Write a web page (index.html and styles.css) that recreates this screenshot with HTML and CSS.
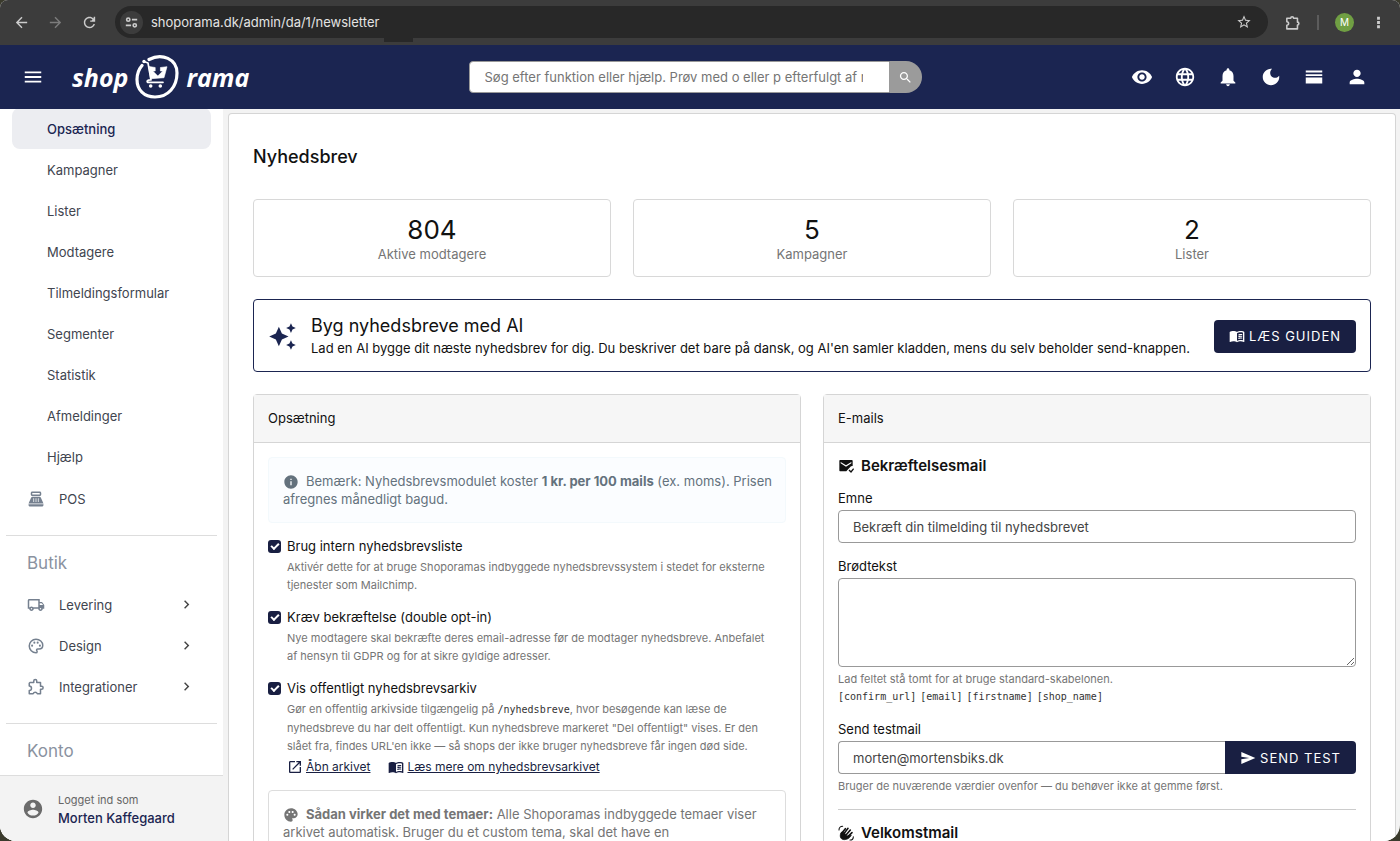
FILE: index.html
```html
<!DOCTYPE html>
<html lang="da">
<head>
  <meta charset="UTF-8">
  <meta name="viewport" content="width=device-width, initial-scale=1">
  <title>Nyhedsbrev</title>
  <link rel="stylesheet" href="styles.css">
</head>
<body>
  <!-- icons used more than once -->
  <svg class="sprite" aria-hidden="true">
    <symbol id="i-book" viewBox="0 0 24 24"><path d="M21 5c-1.11-.35-2.33-.5-3.5-.5-1.95 0-4.05.4-5.5 1.5-1.45-1.1-3.55-1.5-5.5-1.5S2.45 4.9 1 6v14.65c0 .25.25.5.5.5.1 0 .15-.05.25-.05C3.1 20.45 5.05 20 6.5 20c1.95 0 4.05.4 5.5 1.5 1.35-.85 3.8-1.5 5.5-1.5 1.65 0 3.35.3 4.75 1.05.1.05.15.05.25.05.25 0 .5-.25.5-.5V6c-.6-.45-1.25-.75-2-1zm0 13.5c-1.1-.35-2.3-.5-3.5-.5-1.7 0-4.15.65-5.5 1.5V8c1.35-.85 3.8-1.5 5.5-1.5 1.2 0 2.4.15 3.5.5v11.5zM14 9.6c2-.8 4-.9 5.800-.5v1.500c-1.900-.400-3.900-.300-5.800.6zM14 12.300c2-.8 4-.9 5.800-.5v1.500c-1.900-.400-3.900-.300-5.800.6zM14 15c2-.8 4-.9 5.800-.5V16c-1.900-.400-3.900-.300-5.800.6z"/></symbol>
    <symbol id="i-chevron" viewBox="0 0 24 24"><path d="M10 6L8.59 7.41 13.17 12l-4.58 4.59L10 18l6-6z"/></symbol>
  </svg>

  <div class="window">
    <div class="browser">
      <button class="nav-btn" aria-label="Tilbage"><svg viewBox="0 0 24 24"><path d="M20 11H7.83l5.59-5.59L12 4l-8 8 8 8 1.41-1.41L7.83 13H20v-2z"/></svg></button>
      <button class="nav-btn off" aria-label="Frem"><svg viewBox="0 0 24 24"><path d="M4 13h12.170l-5.590 5.590L12 20l8-8-8-8-1.410 1.410L16.170 11H4z"/></svg></button>
      <button class="nav-btn" aria-label="Genindlæs"><svg viewBox="0 0 24 24"><path d="M17.65 6.35C16.2 4.9 14.21 4 12 4c-4.42 0-7.99 3.58-7.99 8s3.57 8 7.99 8c3.73 0 6.84-2.55 7.73-6h-2.08c-.82 2.33-3.04 4-5.65 4-3.31 0-6-2.69-6-6s2.69-6 6-6c1.66 0 3.14.69 4.22 1.78L15 9h-2v2h7V4h-2z"/></svg></button>
      <div class="address">
        <button class="site-info" aria-label="Websiteoplysninger"><svg viewBox="0 0 16 16" fill="none" stroke="currentColor" stroke-width="2"><circle cx="4" cy="4.500" r="2"/><path d="M8.500 4.500H15M1 11.500h6.500"/><circle cx="12" cy="11.500" r="2"/></svg></button>
        <input type="text" value="shoporama.dk/admin/da/1/newsletter" aria-label="Adresse">
        <button class="star" aria-label="Bogmærke"><svg viewBox="0 0 24 24"><path d="M22 9.24l-7.19-.62L12 2 9.19 8.63 2 9.24l5.46 4.73L5.82 21 12 17.27 18.18 21l-1.63-7.03L22 9.24zM12 15.4l-3.76 2.27 1-4.28-3.32-2.88 4.38-.38L12 6.1l1.71 4.04 4.38.38-3.32 2.88 1 4.28L12 15.4z"/></svg></button>
      </div>
      <div class="browser-tools">
        <button aria-label="Udvidelser"><svg viewBox="0 0 24 24" fill="none" stroke="currentColor" stroke-width="2.200" stroke-linejoin="round"><path d="M4 6h5.500a2 2 0 0 1 4 0H19v5.500a2 2 0 0 1 0 4V21H4v-5a2.500 2.500 0 0 0 0-5z"/></svg></button>
        <span class="sep"></span>
        <button class="avatar" aria-label="Profil">M</button>
        <button aria-label="Menu"><svg viewBox="0 0 24 24"><path d="M10 4h4v4h-4zM10 10h4v4h-4zM10 16h4v4h-4z"/></svg></button>
      </div>
    </div>

    <header class="topbar">
      <div class="brand">
        <button aria-label="Menu"><svg viewBox="0 0 24 24"><path d="M3 18h18v-2H3v2zm0-5h18v-2H3v2zm0-7v2h18V6H3z"/></svg></button>
        <a href="#" class="logo">
          <span>shop</span>
          <svg viewBox="0 0 44 46" fill="none" stroke="currentColor" stroke-linecap="round" stroke-linejoin="round">
            <path d="M14 5.500C27-1.500 42 5 42 19 42 33 33 43 20 43 9 43 2 36 2 25.500 2 20 4 15 7 11.500" stroke-width="3.200"/>
            <path d="M9 7.500l4 1.500 3 17c-2.800-.4-4.600 1-3.500 2.300H28" stroke-width="1.700"/>
            <circle cx="9" cy="7.500" r="1.700" fill="currentColor" stroke="none"/>
            <path d="M14 12.500l6.200 1v3.500h-2.400l5 5 5-5h-2.400v-3.500l6.600-.8-3 11-13 1z" fill="currentColor" stroke-width=".6"/>
            <circle cx="15.700" cy="32" r="1.800" fill="currentColor" stroke="none"/>
            <circle cx="25.300" cy="32" r="1.800" fill="currentColor" stroke="none"/>
          </svg>
          <span>rama</span>
        </a>
      </div>
      <form class="search">
        <input type="text" placeholder="Søg efter funktion eller hjælp. Prøv med o eller p efterfulgt af mellemrum" aria-label="Søg">
        <button type="button" aria-label="Søg"><svg viewBox="0 0 24 24"><path d="M15.5 14h-.79l-.28-.27C15.41 12.59 16 11.11 16 9.5 16 5.91 13.09 3 9.5 3S3 5.91 3 9.5 5.91 16 9.5 16c1.61 0 3.09-.59 4.23-1.57l.27.28v.79l5 4.99L20.49 19l-4.99-5zm-6 0C7.01 14 5 11.99 5 9.5S7.01 5 9.5 5 14 7.01 14 9.5 11.99 14 9.5 14z"/></svg></button>
      </form>
      <div class="actions">
        <button aria-label="Se shop"><svg viewBox="0 0 24 24"><path d="M12 4.5C7 4.5 2.73 7.61 1 12c1.73 4.39 6 7.5 11 7.5s9.27-3.11 11-7.5c-1.73-4.39-6-7.5-11-7.5zM12 17c-2.76 0-5-2.24-5-5s2.24-5 5-5 5 2.24 5 5-2.24 5-5 5zm0-8c-1.66 0-3 1.34-3 3s1.34 3 3 3 3-1.34 3-3-1.34-3-3-3z"/></svg></button>
        <button aria-label="Sprog"><svg viewBox="0 0 24 24"><path d="M11.99 2C6.47 2 2 6.48 2 12s4.47 10 9.99 10C17.52 22 22 17.52 22 12S17.52 2 11.99 2zm6.93 6h-2.95c-.32-1.25-.78-2.45-1.38-3.56 1.84.63 3.37 1.91 4.33 3.56zM12 4.04c.83 1.2 1.48 2.53 1.91 3.96h-3.82c.43-1.43 1.08-2.76 1.91-3.96zM4.26 14C4.1 13.36 4 12.69 4 12s.1-1.36.26-2h3.38c-.08.66-.14 1.32-.14 2s.06 1.34.14 2H4.26zm.82 2h2.95c.32 1.25.78 2.45 1.38 3.56-1.84-.63-3.37-1.9-4.33-3.56zm2.95-8H5.08c.96-1.66 2.49-2.93 4.33-3.56C8.81 5.55 8.35 6.75 8.03 8zM12 19.96c-.83-1.2-1.48-2.53-1.91-3.96h3.82c-.43 1.43-1.08 2.76-1.91 3.96zM14.34 14H9.66c-.09-.66-.16-1.32-.16-2s.07-1.35.16-2h4.68c.09.65.16 1.32.16 2s-.07 1.34-.16 2zm.25 5.56c.6-1.11 1.06-2.31 1.38-3.56h2.95c-.96 1.65-2.49 2.93-4.33 3.56zM16.36 14c.08-.66.14-1.32.14-2s-.06-1.34-.14-2h3.38c.16.64.26 1.31.26 2s-.1 1.36-.26 2h-3.38z"/></svg></button>
        <button aria-label="Notifikationer"><svg viewBox="0 0 24 24"><path d="M12 22c1.1 0 2-.9 2-2h-4c0 1.1.89 2 2 2zm6-6v-5c0-3.07-1.64-5.64-4.5-6.32V4c0-.83-.67-1.5-1.5-1.5s-1.5.67-1.5 1.5v.68C7.63 5.36 6 7.92 6 11v5l-2 2v1h16v-1l-2-2z"/></svg></button>
        <button aria-label="Mørkt tema"><svg viewBox="0 0 24 24"><path d="M12 3c-4.97 0-9 4.03-9 9s4.03 9 9 9 9-4.03 9-9c0-.46-.04-.92-.1-1.36-.98 1.37-2.58 2.26-4.4 2.26-2.98 0-5.4-2.42-5.4-5.4 0-1.81.89-3.42 2.26-4.4C12.92 3.04 12.46 3 12 3z"/></svg></button>
        <button aria-label="Visning"><svg viewBox="0 0 24 24"><path d="M3 5h18v2H3zM3 9h18v2H3zM3 12.500h18V19H3z"/></svg></button>
        <button aria-label="Bruger"><svg viewBox="0 0 24 24"><path d="M12 12c2.21 0 4-1.79 4-4s-1.79-4-4-4-4 1.79-4 4 1.79 4 4 4zm0 2c-2.67 0-8 1.34-8 4v2h16v-2c0-2.66-5.33-4-8-4z"/></svg></button>
      </div>
    </header>

    <div class="layout">
      <aside class="sidebar">
        <nav>
          <ul class="sub">
            <li><a href="#" class="active">Opsætning</a></li>
            <li><a href="#">Kampagner</a></li>
            <li><a href="#">Lister</a></li>
            <li><a href="#">Modtagere</a></li>
            <li><a href="#">Tilmeldingsformular</a></li>
            <li><a href="#">Segmenter</a></li>
            <li><a href="#">Statistik</a></li>
            <li><a href="#">Afmeldinger</a></li>
            <li><a href="#">Hjælp</a></li>
          </ul>
          <ul>
            <li><a href="#"><svg viewBox="0 0 24 24" fill-rule="evenodd"><path d="M17 2H7c-1.100 0-2 .9-2 2v2c0 1.100.9 2 2 2h10c1.100 0 2-.9 2-2V4c0-1.100-.9-2-2-2zm0 4H7V4h10zM20 22H4c-1.100 0-2-.9-2-2v-1h20v1c0 1.100-.9 2-2 2zM18.530 10.190C18.210 9.470 17.490 9 16.700 9H7.300c-.79 0-1.510.47-1.830 1.190L2 18h20zM8.500 11h1v5h-1zM11.500 11h1v5h-1zM14.500 11h1v5h-1z"/></svg>POS</a></li>
          </ul>
          <h2>Butik</h2>
          <ul>
            <li><a href="#"><svg viewBox="0 0 24 24"><path d="M20 8h-3V4H3c-1.1 0-2 .9-2 2v11h2c0 1.66 1.34 3 3 3s3-1.34 3-3h6c0 1.66 1.34 3 3 3s3-1.34 3-3h2v-5l-3-4zm-.5 1.5l1.96 2.5H17V9.5h2.5zM6 18c-.55 0-1-.45-1-1s.45-1 1-1 1 .45 1 1-.45 1-1 1zm2.22-3c-.55-.61-1.33-1-2.22-1s-1.67.39-2.22 1H3V6h12v9H8.22zM18 18c-.55 0-1-.45-1-1s.45-1 1-1 1 .45 1 1-.45 1-1 1z"/></svg>Levering<svg class="chev"><use href="#i-chevron"/></svg></a></li>
            <li><a href="#"><svg viewBox="0 0 24 24"><path d="M12 3a9 9 0 0 0 0 18c1 0 1.500-.7 1.500-1.500 0-1.200-.8-1.300-.8-2.300 0-.8.600-1.200 1.500-1.200H16c3 0 5-2.200 5-5 0-4.500-4-8-9-8z" fill="none" stroke="currentColor" stroke-width="2"/><circle cx="6.800" cy="11.500" r="1.400"/><circle cx="9.800" cy="7.500" r="1.400"/><circle cx="14.200" cy="7.500" r="1.400"/><circle cx="17.200" cy="11.500" r="1.400"/></svg>Design<svg class="chev"><use href="#i-chevron"/></svg></a></li>
            <li><a href="#"><svg viewBox="0 0 24 24" fill="none" stroke="currentColor" stroke-width="2" stroke-linejoin="round"><path d="M4 6h5V4a2 2 0 0 1 4 0v2h5v5h1.500a2 2 0 0 1 0 4H18v6h-4.200a3 3 0 0 0-5.600 0H3v-4.500a3 3 0 0 0 0-6V7z"/></svg>Integrationer<svg class="chev"><use href="#i-chevron"/></svg></a></li>
          </ul>
          <h2>Konto</h2>
        </nav>
        <div class="user">
          <svg viewBox="0 0 24 24"><path d="M12 2C6.48 2 2 6.48 2 12s4.48 10 10 10 10-4.48 10-10S17.52 2 12 2zm0 3c1.66 0 3 1.34 3 3s-1.34 3-3 3-3-1.34-3-3 1.34-3 3-3zm0 14.2c-2.5 0-4.71-1.28-6-3.22.03-1.99 4-3.08 6-3.08 1.99 0 5.97 1.09 6 3.08-1.29 1.94-3.5 3.22-6 3.22z"/></svg>
          <div>
            <span>Logget ind som</span>
            <strong>Morten Kaffegaard</strong>
          </div>
        </div>
      </aside>

      <main class="page">
        <h1>Nyhedsbrev</h1>

        <div class="stats">
          <div class="stat"><b>804</b><span>Aktive modtagere</span></div>
          <div class="stat"><b>5</b><span>Kampagner</span></div>
          <div class="stat"><b>2</b><span>Lister</span></div>
        </div>

        <div class="ai">
          <svg viewBox="0 0 24 24"><path d="M19 9l1.25-2.75L23 5l-2.75-1.25L19 1l-1.25 2.75L15 5l2.75 1.25L19 9zm-7.5.5L9 4 6.5 9.5 1 12l5.5 2.5L9 20l2.5-5.5L17 12l-5.5-2.5zM19 15l-1.25 2.75L15 19l2.75 1.25L19 23l1.25-2.75L23 19l-2.75-1.25L19 15z"/></svg>
          <div class="ai-text">
            <h2>Byg nyhedsbreve med AI</h2>
            <p>Lad en AI bygge dit næste nyhedsbrev for dig. Du beskriver det bare på dansk, og AI'en samler kladden, mens du selv beholder send-knappen.</p>
          </div>
          <a href="#" class="btn"><svg><use href="#i-book"/></svg>Læs guiden</a>
        </div>

        <div class="panels">
          <section class="panel">
            <h3>Opsætning</h3>
            <div class="panel-body">
              <div class="note info">
                <svg viewBox="0 0 24 24"><path d="M12 2C6.48 2 2 6.48 2 12s4.48 10 10 10 10-4.48 10-10S17.52 2 12 2zm1 15h-2v-6h2v6zm0-8h-2V7h2v2z"/></svg>Bemærk: Nyhedsbrevsmodulet koster <b>1 kr. per 100 mails</b> (ex. moms). Prisen afregnes månedligt bagud.
              </div>

              <div class="check">
                <input type="checkbox" id="intern" checked>
                <label for="intern">Brug intern nyhedsbrevsliste</label>
                <p class="help">Aktivér dette for at bruge Shoporamas indbyggede nyhedsbrevssystem i stedet for eksterne tjenester som Mailchimp.</p>
              </div>
              <div class="check">
                <input type="checkbox" id="optin" checked>
                <label for="optin">Kræv bekræftelse (double opt-in)</label>
                <p class="help">Nye modtagere skal bekræfte deres email-adresse før de modtager nyhedsbreve. Anbefalet af hensyn til GDPR og for at sikre gyldige adresser.</p>
              </div>
              <div class="check">
                <input type="checkbox" id="arkiv" checked>
                <label for="arkiv">Vis offentligt nyhedsbrevsarkiv</label>
                <p class="help">Gør en offentlig arkivside tilgængelig på <code>/nyhedsbreve</code>, hvor besøgende kan læse de nyhedsbreve du har delt offentligt. Kun nyhedsbreve markeret "Del offentligt" vises. Er den slået fra, findes URL'en ikke — så shops der ikke bruger nyhedsbreve får ingen død side.</p>
                <div class="links">
                  <a href="#"><svg viewBox="0 0 24 24"><path d="M19 19H5V5h7V3H5c-1.11 0-2 .9-2 2v14c0 1.1.89 2 2 2h14c1.1 0 2-.9 2-2v-7h-2v7zM14 3v2h3.59l-9.83 9.83 1.41 1.41L19 6.41V10h2V3h-7z"/></svg><span>Åbn arkivet</span></a>
                  <a href="#"><svg><use href="#i-book"/></svg><span>Læs mere om nyhedsbrevsarkivet</span></a>
                </div>
              </div>

              <div class="note">
                <svg viewBox="0 0 24 24"><path d="M12 2C6.49 2 2 6.49 2 12s4.49 10 10 10c1.38 0 2.5-1.12 2.5-2.5 0-.61-.23-1.2-.64-1.67-.08-.1-.13-.21-.13-.33 0-.28.22-.5.5-.5H16c3.31 0 6-2.69 6-6 0-4.96-4.49-9-10-9zm5.5 11c-.83 0-1.5-.67-1.5-1.5s.67-1.5 1.5-1.5 1.5.67 1.5 1.5-.67 1.5-1.5 1.5zm-3-4c-.83 0-1.5-.67-1.5-1.5S13.67 6 14.5 6s1.5.67 1.5 1.5S15.33 9 14.5 9zM5 11.5c0-.83.67-1.5 1.5-1.5s1.5.67 1.5 1.5S7.33 13 6.5 13 5 12.33 5 11.5zm6-4c0 .83-.67 1.5-1.5 1.5S8 8.33 8 7.5 8.67 6 9.5 6s1.5.67 1.5 1.5z"/></svg><b>Sådan virker det med temaer:</b> Alle Shoporamas indbyggede temaer viser arkivet automatisk. Bruger du et custom tema, skal det have en
              </div>
            </div>
          </section>

          <section class="panel">
            <h3>E-mails</h3>
            <div class="panel-body">
              <h4><svg viewBox="0 0 24 24"><path fill-rule="evenodd" d="M3.500 3h17C21.300 3 22 3.700 22 4.500V12l-2.500.5-5 5L12.500 20H3.500C2.700 20 2 19.300 2 18.500v-14C2 3.700 2.700 3 3.500 3zM4 6v2l8 5 8-5V6l-8 5z"/><path d="M16.500 18l3 3 4-5" fill="none" stroke="currentColor" stroke-width="2"/></svg>Bekræftelsesmail</h4>
              <div class="field">
                <label for="emne">Emne</label>
                <input type="text" id="emne" value="Bekræft din tilmelding til nyhedsbrevet">
              </div>
              <div class="field">
                <label for="tekst">Brødtekst</label>
                <textarea id="tekst"></textarea>
                <p class="help">Lad feltet stå tomt for at bruge standard-skabelonen.</p>
                <p class="help tags"><code>[confirm_url]</code><code>[email]</code><code>[firstname]</code><code>[shop_name]</code></p>
              </div>
              <div class="field">
                <label for="test">Send testmail</label>
                <div class="group">
                  <input type="email" id="test" value="morten@mortensbiks.dk">
                  <button class="btn"><svg viewBox="0 0 24 24"><path d="M2.01 21L23 12 2.01 3 2 10l12 2-12 2z"/></svg>Send test</button>
                </div>
                <p class="help">Bruger de nuværende værdier ovenfor — du behøver ikke at gemme først.</p>
              </div>
              <hr>
              <h4><svg viewBox="0 0 24 24" fill="none" stroke="currentColor" stroke-linecap="round"><path d="M5 13l6-7.500M7.500 15l7.500-10M10.500 17l8-9.500M13.500 18.500l7.500-7" stroke-width="2.400"/><path d="M5 11c-3 4-2.500 11 4.500 11 5 0 8-2.500 10.500-6.500l-7 1-4-5.500z" fill="currentColor" stroke-width="1"/><path d="M1.500 7.500c0-3 2-5.500 5.500-5.500M23 17.500c0 3-2 5-5 5" stroke-width="1.600"/></svg>Velkomstmail</h4>
            </div>
          </section>
        </div>
      </main>
    </div>
  </div>
</body>
</html>
```
FILE: styles.css
```css
* {
  box-sizing: border-box;
  margin: 0;
  padding: 0;
}
body {
  background: #3a3a2c;
  color: #111;
  font: 13px/18px Inter, "Liberation Sans", sans-serif;
}
ul {
  list-style: none;
}
a {
  color: inherit;
  text-decoration: none;
}
button {
  border: 0;
  background: none;
  color: inherit;
  font: inherit;
  cursor: pointer;
}
input, textarea {
  font: inherit;
  color: #444;
  outline: 0;
}
svg {
  flex: none;
  display: block;
  fill: currentColor;
}
svg[fill="none"] {
  fill: none;
}
.sprite {
  position: absolute;
  width: 0;
  height: 0;
}

.window {
  display: flex;
  flex-direction: column;
  height: 100vh;
  overflow: hidden;
  border-radius: 8px 8px 16px 16px;
  background: #f3f3f3;
}

/* browser bar */
.browser {
  display: flex;
  align-items: center;
  flex: none;
  height: 45px;
  padding: 0 13px 1px;
  background: #3c3c3c;
  color: #ccc;
}
.nav-btn {
  width: 34px;
}
.nav-btn svg {
  width: 17px;
  height: 17px;
}
.off {
  color: #7c7c7c;
}
.address {
  display: flex;
  align-items: center;
  flex: 1;
  position: relative;
  height: 32px;
  padding: 0 16px 0 5px;
  border-radius: 16px;
  background: #282828;
}
.address::after {
  content: "";
  position: absolute;
  left: 269px;
  top: 32px;
  width: 29px;
  height: 4px;
  background: #282828;
}
.site-info {
  display: flex;
  align-items: center;
  justify-content: center;
  width: 23px;
  height: 23px;
  border-radius: 50%;
  background: #3c3c3c;
}
.site-info svg {
  width: 13px;
  height: 13px;
}
.address input {
  flex: 1;
  margin-left: 8px;
  border: 0;
  background: none;
  color: #e3e3e3;
}
.star svg {
  width: 16px;
  height: 16px;
}
.browser-tools {
  display: flex;
  align-items: center;
  gap: 16px;
  padding-left: 16px;
}
.browser-tools svg {
  width: 17px;
  height: 17px;
}
.browser-tools .sep {
  width: 2px;
  height: 15px;
  background: #5c5c5c;
}
.browser-tools .avatar {
  width: 19px;
  height: 19px;
  border-radius: 50%;
  background: #709f43;
  color: #fff;
  font-size: 10px;
}

/* top bar */
.topbar {
  display: grid;
  grid-template-columns: 1fr minmax(0, 453px) 1fr;
  align-items: center;
  flex: none;
  height: 64px;
  padding: 0 32px 0 22px;
  background: #1b2551;
  color: #fff;
}
.brand {
  display: flex;
  align-items: center;
  gap: 28px;
}
.brand button svg,
.actions svg {
  width: 22px;
  height: 22px;
}
.logo {
  display: flex;
  align-items: center;
  gap: 7px;
  font: italic bold 25px/30px "Open Sans", sans-serif;
}
.logo svg {
  width: 44px;
  height: 46px;
}
.search {
  display: flex;
}
.search input {
  flex: 1;
  min-width: 0;
  height: 32px;
  padding: 0 26px 0 15px;
  border: 1px solid #999;
  border-radius: 4px 0 0 4px;
  background: #fff;
}
.search input::placeholder {
  color: #757575;
}
.search button {
  width: 32px;
  height: 32px;
  padding-left: 8px;
  border-radius: 0 16px 16px 0;
  background: #9b9b9b;
}
.search svg {
  width: 15px;
  height: 15px;
}
.actions {
  display: flex;
  justify-content: flex-end;
  gap: 21px;
}

/* sidebar */
.layout {
  display: flex;
  flex: 1;
  min-height: 0;
}
.sidebar {
  display: flex;
  flex-direction: column;
  flex: none;
  width: 223px;
  background: #fff;
}
.sidebar nav {
  flex: 1;
  min-height: 0;
  overflow: hidden;
}
.sidebar li {
  padding: 0 12px;
}
.sidebar li a {
  display: flex;
  align-items: center;
  gap: 14px;
  height: 41px;
  padding: 0 16px 0 15px;
  color: #41454f;
}
.sidebar .sub {
  margin: -1px 0 1px;
}
.sidebar .sub a {
  padding-left: 35px;
}
.sidebar .sub .active {
  border-radius: 8px;
  background: #ecedf1;
  color: #1b2551;
  font-weight: 500;
}
.sidebar li svg {
  width: 18px;
  height: 18px;
  color: #75808f;
}
.sidebar li .chev {
  width: 17px;
  height: 17px;
  margin-left: auto;
  color: #444;
}
.sidebar h2 {
  margin: 16px 6px 0;
  padding: 17px 21px 11px;
  border-top: 1px solid #ddd;
  color: #8a92a0;
  font-size: 17px;
  font-weight: 400;
  line-height: 20px;
}
.user {
  display: flex;
  align-items: center;
  gap: 14px;
  height: 66px;
  padding: 0 22px;
  border-top: 1px solid #ddd;
  background: #f3f3f3;
}
.user svg {
  width: 22px;
  height: 22px;
  color: #6b6b6b;
}
.user span,
.user strong {
  display: block;
}
.user span {
  color: #666;
  font-size: 11px;
}
.user strong {
  color: #1b2551;
  font-weight: 500;
}

/* page */
.page {
  flex: 1;
  min-width: 0;
  margin: 4px 4px 0 5px;
  padding: 32px 24px 0;
  overflow: hidden;
  border: 1px solid #d5d5d5;
  border-bottom: 0;
  border-radius: 4px 4px 0 0;
  background: #fff;
}
.page h1 {
  margin-bottom: 31px;
  font-size: 18px;
  font-weight: 500;
  line-height: 22px;
}
.stats {
  display: grid;
  grid-template-columns: repeat(3, 1fr);
  gap: 22px;
}
.stat {
  height: 78px;
  padding-top: 15px;
  border: 1px solid #d8d8d8;
  border-radius: 4px;
  text-align: center;
}
.stat b {
  display: block;
  font-size: 26px;
  font-weight: 400;
  line-height: 30px;
}
.stat span {
  color: #757575;
}
.ai {
  display: flex;
  align-items: center;
  margin: 22px 0;
  padding: 14px 14px 13px;
  border: 1px solid #1b2551;
  border-radius: 4px;
}
.ai > svg {
  width: 29px;
  height: 29px;
  margin-right: 14px;
  color: #1b2551;
}
.ai-text {
  flex: 1;
}
.ai h2 {
  font-size: 18px;
  font-weight: 400;
  line-height: 24px;
}
.ai p {
  line-height: 20px;
}
.btn {
  display: flex;
  align-items: center;
  gap: 4px;
  height: 33px;
  padding: 0 15px;
  border-radius: 4px;
  background: #191f42;
  color: #fff;
  letter-spacing: 1px;
  text-transform: uppercase;
  white-space: nowrap;
}
.btn svg {
  width: 16px;
  height: 16px;
}

/* panels */
.panels {
  display: grid;
  grid-template-columns: repeat(2, minmax(0, 1fr));
  gap: 22px;
}
.panel {
  border: 1px solid #d5d5d5;
  border-radius: 4px;
}
.panel h3 {
  padding: 14px;
  border-bottom: 1px solid #d5d5d5;
  background: #f6f6f6;
  font-size: 13px;
  font-weight: 400;
  line-height: 19px;
}
.panel-body {
  padding: 14px;
}
.note {
  padding: 14px 8px 14px 14px;
  border: 1px solid #ddd;
  border-radius: 4px;
  color: #757575;
}
.note.info {
  margin-bottom: 14px;
  border-color: #f3f9fc;
  background: #fbfdff;
  color: #64727d;
}
.note svg {
  display: inline-block;
  width: 16px;
  height: 16px;
  margin-right: 7px;
  vertical-align: -4px;
}
.check {
  display: grid;
  grid-template-columns: 13px 1fr;
  column-gap: 6px;
  row-gap: 3px;
  align-items: center;
  margin-bottom: 14px;
}
.check input {
  display: flex;
  align-items: center;
  justify-content: center;
  width: 13px;
  height: 13px;
  appearance: none;
  border-radius: 3px;
  background: #191f42;
}
.check input:checked::after {
  content: "";
  width: 6px;
  height: 3px;
  margin-bottom: 2px;
  border: solid #fff;
  border-width: 0 0 2px 2px;
  transform: rotate(-45deg);
}
.check .help,
.links {
  grid-column: 2;
}
.check .help {
  padding-right: 16px;
}
.help {
  color: #757575;
  font-size: 11px;
}
code {
  color: #333;
  font: 10px/18px "DejaVu Sans Mono", monospace;
}
.links {
  display: flex;
  gap: 18px;
  color: #191f42;
  font-size: 12px;
}
.links a {
  display: flex;
  align-items: center;
  gap: 3px;
}
.links span {
  text-decoration: underline;
}
.links svg {
  width: 16px;
  height: 16px;
}
.panel h4 {
  display: flex;
  align-items: center;
  gap: 7px;
  margin-bottom: 14px;
  font-size: 15px;
  font-weight: 600;
}
.panel h4 svg {
  width: 16px;
  height: 16px;
}
.field {
  margin-bottom: 14px;
}
.field label {
  display: block;
  margin-bottom: 3px;
}
.field input,
.field textarea {
  display: block;
  width: 100%;
  height: 33px;
  padding: 0 14px;
  border: 1px solid #999;
  border-radius: 4px;
  background: #fff;
}
.field textarea {
  height: 89px;
  padding: 8px 14px;
  resize: vertical;
}
.field .help {
  margin-top: 3px;
}
.field .tags {
  display: flex;
  gap: 4px;
  margin-top: 0;
}
.group {
  display: flex;
}
.group input {
  flex: 1;
  border-right: 0;
  border-radius: 4px 0 0 4px;
}
.group .btn {
  border-radius: 0 4px 4px 0;
}
.panel hr {
  margin-bottom: 14px;
  border: 0;
  border-top: 1px solid #ccc;
}
```
